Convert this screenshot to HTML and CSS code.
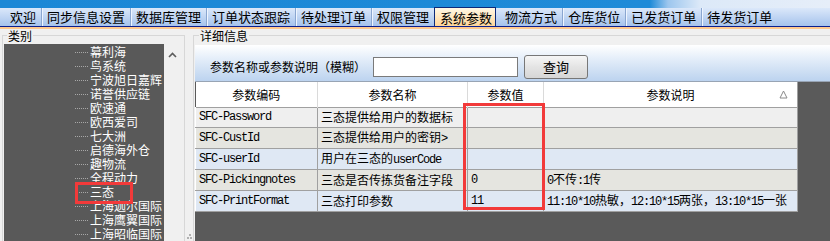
FILE: index.html
```html
<!DOCTYPE html>
<html lang="zh">
<head>
<meta charset="utf-8">
<link rel="stylesheet" href="styles.css">
</head>
<body>
<div class="top-band"></div>
<nav class="tabbar">
  <span class="tab">欢迎</span>
  <span class="tab">同步信息设置</span>
  <span class="tab">数据库管理</span>
  <span class="tab">订单状态跟踪</span>
  <span class="tab">待处理订单</span>
  <span class="tab nosep">权限管理</span>
  <span class="tab active">系统参数</span>
  <span class="tab">物流方式</span>
  <span class="tab">仓库货位</span>
  <span class="tab">已发货订单</span>
  <span class="tab nosep">待发货订单</span>
</nav>
<div class="navy-line"></div>
<div class="orange-line"></div>
<main class="main">
  <fieldset class="group left-group">
    <legend>类别</legend>
    <div class="left-body">
      <ul class="tree">
        <li>幕利海</li>
        <li>鸟系统</li>
        <li>宁波旭日嘉辉</li>
        <li>诺誉供应链</li>
        <li>欧速通</li>
        <li>欧西爱司</li>
        <li>七大洲</li>
        <li>启德海外仓</li>
        <li>趣物流</li>
        <li>全程动力</li>
        <li>三态</li>
        <li>上海迦尔国际</li>
        <li>上海鹰翼国际</li>
        <li>上海昭临国际</li>
      </ul>
      <div class="vscroll">
        <svg width="9" height="6" viewBox="0 0 9 6"><polyline points="1,5 4.5,1.5 8,5" fill="none" stroke="#5c5c5c" stroke-width="1.6"/></svg>
      </div>
    </div>
  </fieldset>
  <div class="splitter"><span class="grip"></span></div>
  <fieldset class="group right-group">
    <legend>详细信息</legend>
    <div class="search-band">
      <span class="search-label">参数名称或参数说明（模糊）</span>
      <span class="search-input"></span>
      <span class="search-btn">查询</span>
    </div>
    <div class="grid">
      <table class="params">
        <colgroup>
          <col class="c1"><col class="c2"><col class="c3"><col class="c4">
        </colgroup>
        <thead>
          <tr>
            <th>参数编码</th>
            <th>参数名称</th>
            <th>参数值</th>
            <th class="sorted">参数说明<svg class="sort" width="9" height="9" viewBox="0 0 9 9"><polygon points="4.5,1 8,8 1,8" fill="none" stroke="#8a8a8a" stroke-width="1"/></svg></th>
          </tr>
        </thead>
        <tbody>
          <tr class="r-a">
            <td class="m">SFC-Password</td>
            <td>三态提供给用户的数据标</td>
            <td></td>
            <td></td>
          </tr>
          <tr class="r-b">
            <td class="m">SFC-CustId</td>
            <td>三态提供给用户的密钥<span class="m">&gt;</span></td>
            <td></td>
            <td></td>
          </tr>
          <tr class="r-c">
            <td class="m">SFC-userId</td>
            <td>用户在三态的<span class="m">userCode</span></td>
            <td></td>
            <td></td>
          </tr>
          <tr class="r-b">
            <td class="m">SFC-Pickingnotes</td>
            <td>三态是否传拣货备注字段</td>
            <td class="m">0</td>
            <td><span class="m">0</span>不传<span class="m">:1</span>传</td>
          </tr>
          <tr class="r-c">
            <td class="m">SFC-PrintFormat</td>
            <td>三态打印参数</td>
            <td class="m">11</td>
            <td><span class="m">11:10*10</span>热敏，<span class="m">12:10*15</span>两张，<span class="m">13:10*15</span>一张</td>
          </tr>
        </tbody>
      </table>
    </div>
  </fieldset>
</main>
<div class="mark mark-tree"></div>
<div class="mark mark-col"></div>
</body>
</html>
```

FILE: styles.css
```css
* { box-sizing: border-box; }
html, body { margin: 0; padding: 0; }
body {
  width: 830px;
  height: 241px;
  overflow: hidden;
  position: relative;
  background: #f0f0f0;
  font-family: "Noto Sans CJK SC", "Liberation Sans", sans-serif;
  font-size: 12px;
  color: #000;
}

.top-band {
  height: 8px;
  background: linear-gradient(to right, #1c88d6 0, #1f8bd8 650px, #9cc6ee 668px, #dce9f8 700px, #e6eef9 830px);
}

.tabbar {
  display: flex;
  height: 18px;
  padding-left: 6px;
  background: linear-gradient(#dbe8fa, #a6c3ec);
  font-size: 13px;
  line-height: 18px;
}
.tab {
  padding: 0 5px 0 4px;
  border-right: 1px solid #8aa6d0;
  box-shadow: 1px 0 0 #eef5ff;
  margin-right: 1px;
  white-space: nowrap;
}
.tab.nosep { border-right: none; box-shadow: none; margin-right: 0; }
.tab.active {
  margin-top: -1px;
  height: 19px;
  padding: 1px 3px 0 5px;
  background: linear-gradient(#fff8e6, #ffd598);
  border: 1px solid #0c2a7a;
  border-bottom: none;
  box-shadow: none;
  margin-right: 5px;
}
.navy-line { height: 1px; background: #0b1f8e; }
.orange-line { height: 2px; background: #ffc98e; }

.main {
  display: flex;
  height: 212px;
  overflow: hidden;
}

.group {
  margin: 0;
  border: 1px solid #d7d7d7;
  min-width: 0;
}
.group legend {
  padding: 0 1px;
  margin-left: 3px;
  font-size: 12px;
  line-height: 13px;
}

.left-group {
  width: 183px;
  margin-left: 2px;
  padding: 2px 2px 0 1px;
  height: 240px;
}
.left-body {
  display: flex;
  height: 200px;
}
.tree {
  list-style: none;
  margin: 0;
  padding: 1px 0 0 0;
  width: 160px;
  background: #595959;
  color: #fff;
  line-height: 14px;
  font-size: 12px;
  white-space: nowrap;
  overflow: hidden;
}
.tree li {
  display: flex;
  align-items: center;
  height: 14px;
  padding-left: 71px;
}
.tree li::before {
  content: "";
  width: 13px;
  border-top: 1px dotted #a8a8a8;
  margin-right: 2px;
}
.vscroll {
  width: 18px;
  padding: 8px 0 0 4px;
}
.vscroll svg { display: block; }

.splitter {
  width: 8px;
  position: relative;
  flex: none;
}
.grip {
  position: absolute;
  left: 2px;
  bottom: 2px;
  width: 2px;
  height: 2px;
  background: #b0b0b0;
  box-shadow: 2px -3px 0 #b0b0b0, 3px 0 0 #b0b0b0;
}

.right-group {
  flex: 1;
  padding: 3px 0 0 1px;
  margin-right: -4px;
  height: 240px;
}
.right-group legend { margin-left: 4px; }

.search-band {
  display: flex;
  align-items: flex-start;
  height: 37px;
  padding: 10px 0 0 15px;
  background: linear-gradient(#ffffff, #e3edf9 40%, #bcd3ef);
  border-bottom: 1px solid #98a4b4;
}
.search-label {
  line-height: 24px;
  font-size: 12px;
  white-space: nowrap;
}
.search-input {
  width: 145px;
  height: 20px;
  margin: 2px 0 0 7px;
  background: #fff;
  border: 1px solid #7a7a7a;
}
.search-btn {
  width: 64px;
  height: 24px;
  margin-left: 6px;
  border: 1px solid #777;
  border-radius: 3px;
  background: linear-gradient(#f6f6f6, #e4e4e4 50%, #d6d6d6);
  text-align: center;
  line-height: 22px;
  font-size: 13px;
}

.grid {
  background: #5a5a5a;
  height: 170px;
}
.params {
  border-collapse: collapse;
  table-layout: fixed;
  width: 602px;
}
.c1 { width: 122px; }
.c2 { width: 150px; }
.c3 { width: 76px; }
.c4 { width: 254px; }

.params th {
  height: 25px;
  padding: 0;
  background: #fff;
  font-weight: normal;
  font-size: 12px;
  text-align: center;
  border-right: 1px solid #dadada;
  position: relative;
}
.params th.sorted { border-right: 1px solid #a0a0a0; }
.sort {
  position: absolute;
  right: 9px;
  top: 8px;
}
.params td {
  height: 20px;
  padding: 0 0 0 3px;
  border: 1px solid #a0a0a0;
  white-space: nowrap;
  overflow: hidden;
  font-size: 12px;
  line-height: 18px;
}
.params td:first-child { border-left: 1px solid #ffffff; }
.r-a td { background: #efefef; }
.r-b td { background: #e5e5e0; }
.r-c td { background: #dfe8f4; }

.m {
  font-family: "Liberation Mono", monospace;
  font-size: 12px;
  letter-spacing: -1.2px;
}

.mark {
  position: absolute;
  border: 3px solid #f23a3a;
}
.mark-tree { left: 75px; top: 182px; width: 58px; height: 22px; }
.mark-col { left: 463px; top: 103px; width: 82px; height: 107px; }
```
